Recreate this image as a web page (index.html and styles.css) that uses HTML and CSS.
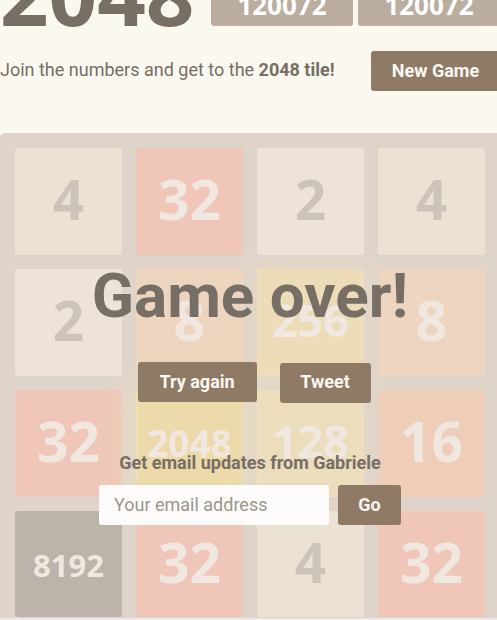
FILE: index.html
```html
<!DOCTYPE html>
<html lang="en">
<head>
<meta charset="utf-8">
<title>2048</title>
<link rel="stylesheet" href="styles.css">
</head>
<body>
<header class="heading">
  <h1 class="title">2048</h1>
  <div class="score">120072</div>
  <div class="score">120072</div>
</header>
<section class="intro">
  <p class="tagline">Join the numbers and get to the <strong>2048 tile!</strong></p>
  <button class="button new-game" type="button">New Game</button>
</section>
<main class="board">
  <div class="grid">
    <div class="tile t4">4</div><div class="tile t32">32</div><div class="tile t2">2</div><div class="tile t4">4</div>
    <div class="tile t2">2</div><div class="tile t8">8</div><div class="tile t256">256</div><div class="tile t8">8</div>
    <div class="tile t32">32</div><div class="tile t2048">2048</div><div class="tile t128">128</div><div class="tile t16">16</div>
    <div class="tile t8192">8192</div><div class="tile t32">32</div><div class="tile t4">4</div><div class="tile t32">32</div>
  </div>
  <div class="message">
    <h2 class="result">Game over!</h2>
    <div class="actions">
      <button class="button try-again" type="button">Try again</button>
      <a class="button tweet" href="#tweet">Tweet</a>
    </div>
    <form class="subscribe">
      <label class="subscribe-label" for="email">Get email updates from Gabriele</label>
      <div class="fields">
        <input class="email" id="email" type="email" placeholder="Your email address">
        <button class="button go" type="submit">Go</button>
      </div>
    </form>
  </div>
</main>
</body>
</html>
```
FILE: styles.css
```css
* { box-sizing: border-box; }
html { background: #e8eaed; }
body {
  margin: 0;
  overflow: hidden;
  font-family: Roboto, sans-serif;
  font-size: 18px;
  color: #776e65;
}
.heading {
  display: flex;
  align-items: flex-end;
  gap: 5px;
  height: 26px;
  background: #fbf8ef;
}
.title {
  flex: 1;
  margin: 0;
  font-family: "Noto Sans", sans-serif;
  font-size: 85px;
  line-height: 66px;
  font-weight: bold;
}
.score {
  flex: 0 0 142px;
  height: 55px;
  padding-top: 21px;
  border-radius: 3px;
  background: #bbada0;
  color: #fff;
  font-family: "Noto Sans", sans-serif;
  font-size: 26px;
  line-height: 26px;
  font-weight: bold;
  text-align: center;
}
.score:last-child { margin-right: -3px; }
.intro {
  display: flex;
  align-items: flex-start;
  justify-content: space-between;
  height: 107px;
  padding-top: 25px;
  background: #fbf8ef;
}
.tagline {
  margin: 0;
  line-height: 38px;
  white-space: nowrap;
}
.button {
  height: 40px;
  padding: 0;
  border: 0;
  border-radius: 3px;
  background: #8f7a66;
  color: #f9f6f2;
  font: bold 18px/38px Roboto, sans-serif;
  text-align: center;
  text-decoration: none;
  white-space: nowrap;
}
.new-game {
  flex: 0 0 129px;
  margin-right: -3px;
}
.try-again { width: 119px; }
.tweet { width: 91px; }
.go { width: 63px; }
.board {
  position: relative;
  padding: 15px 12px 1px 15px;
  border-radius: 6px 0 0 0;
  background: #bbada0;
  box-shadow: 0 -6px 0 #fbf8ef;
}
.grid {
  display: grid;
  grid-template-columns: repeat(4, 1fr);
  grid-template-rows: repeat(3, 107px) 106px;
  gap: 14px;
}
.tile {
  border-radius: 3px;
  font-family: "Noto Sans", sans-serif;
  font-size: 55px;
  line-height: 102px;
  font-weight: bold;
  text-align: center;
  color: #f9f6f2;
}
.t2 { background: #eee4da; color: #776e65; }
.t4 { background: #ede0c8; color: #776e65; }
.t8 { background: #f2b179; }
.t16 { background: #f59563; }
.t32 { background: #f67c5f; }
.t128 {
  background: #edcf72;
  font-size: 45px;
  box-shadow: 0 0 30px 10px rgba(243, 215, 116, 0.24), inset 0 0 0 1px rgba(255, 255, 255, 0.14);
}
.t256 {
  background: #edcc61;
  font-size: 45px;
  box-shadow: 0 0 30px 10px rgba(243, 215, 116, 0.32), inset 0 0 0 1px rgba(255, 255, 255, 0.19);
}
.t2048 {
  background: #edc22e;
  font-size: 37px;
  line-height: 106px;
  box-shadow: 0 0 30px 10px rgba(243, 215, 116, 0.56), inset 0 0 0 1px rgba(255, 255, 255, 0.33);
}
.t8192 {
  background: #3c3a32;
  font-size: 31px;
  line-height: 108px;
}
.message {
  position: absolute;
  inset: 0;
  display: flex;
  flex-direction: column;
  align-items: center;
  padding: 133px 0 0 3px;
  border-radius: 6px 0 0 0;
  background: rgba(236, 226, 217, 0.73);
}
.result {
  margin: 0;
  font-size: 62px;
  line-height: 60px;
}
.actions {
  display: flex;
  gap: 23px;
  margin-top: 36px;
  padding-left: 8px;
}
.tweet { margin-top: 1px; }
.subscribe { margin-top: 48px; }
.subscribe-label {
  display: block;
  font-weight: bold;
  line-height: 24px;
  text-align: center;
}
.fields {
  display: flex;
  gap: 9px;
  margin-top: 10px;
}
.email {
  width: 230px;
  height: 40px;
  padding: 0 15px 2px;
  border: 0;
  border-radius: 3px;
  background: #fdfcfa;
  color: #776e65;
  font: 18px Roboto, sans-serif;
}
.email::placeholder { color: #9d958c; opacity: 1; }
```
